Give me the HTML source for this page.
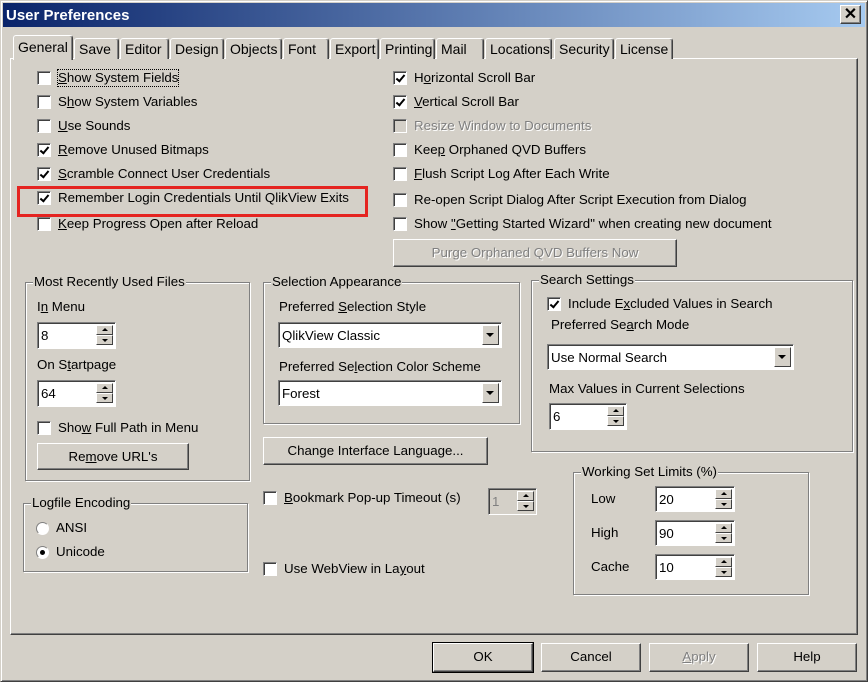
<!DOCTYPE html>
<html><head><meta charset="utf-8"><style>
*{box-sizing:border-box;margin:0;padding:0}
body{width:868px;height:682px;background:#d4d0c8;font-family:"Liberation Sans",Arial,sans-serif;font-size:13.3px;color:#000;position:relative;overflow:hidden}
.a{position:absolute;white-space:nowrap}
#win{position:absolute;left:0;top:0;width:868px;height:682px;border-top:1px solid #d4d0c8;border-left:1px solid #d4d0c8;border-right:1px solid #404040;border-bottom:1px solid #404040;box-shadow:inset 1px 1px 0 #fff,inset -1px -1px 0 #808080}
#title{position:absolute;left:3px;top:3px;width:862px;height:24px;background:linear-gradient(90deg,#0a246a,#a6caf0);color:#fff;font-weight:bold;font-size:15px;padding:4px 0 0 3px}
.close{position:absolute;left:840px;top:5px;width:21px;height:19px;background:#d4d0c8;border:1px solid;border-color:#fff #404040 #404040 #fff;box-shadow:inset -1px -1px 0 #808080;font-size:16px;font-weight:bold;color:#000;text-align:center;line-height:17px}
#panel{position:absolute;left:10px;top:58px;width:848px;height:577px;border:1px solid;border-color:#fff #404040 #404040 #fff;box-shadow:inset -1px -1px 0 #808080}
.tab{position:absolute;top:38px;height:21px;border:1px solid;border-bottom:none;border-color:#fff #404040 #404040 #fff;border-radius:3px 3px 0 0;box-shadow:inset -1px 0 0 #808080;padding:2px 0 0 4px;font-size:14px;background:#d4d0c8}
.tab.sel{top:35px;height:25px;z-index:2;padding-top:3px}
.cb{position:absolute;width:14px;height:14px;background:#fff;border:1px solid;border-color:#808080 #fff #fff #808080;box-shadow:inset 1px 1px 0 #404040}
.cb.dis{background:#d4d0c8}
.cb.on::after{content:"";position:absolute;left:4px;top:1px;width:3px;height:7px;border:solid #000;border-width:0 2px 2px 0;transform:rotate(40deg)}
.t{position:absolute;white-space:nowrap;font-size:13.3px;line-height:16px}
.dt{color:#808080;text-shadow:1px 1px 0 #fff}
.btn{position:absolute;border:1px solid;border-color:#fff #404040 #404040 #fff;box-shadow:inset -1px -1px 0 #808080;text-align:center;font-size:13.3px}
.grp{position:absolute;border:1px solid #808080;box-shadow:1px 1px 0 #fff,inset 1px 1px 0 #fff}
.grp span{position:absolute;top:-9px;left:7px;background:#d4d0c8;padding:0 1px;font-size:13.3px;line-height:16px}
.edit{position:absolute;background:#fff;border:1px solid;border-color:#808080 #fff #fff #808080;box-shadow:inset 1px 1px 0 #404040;font-size:13.3px;padding:5px 0 0 3px}
.spin{position:absolute;right:2px;width:17px}
.spin i{display:block;position:absolute;left:0;width:17px;height:10px;background:#d4d0c8;border:1px solid;border-color:#fff #404040 #404040 #fff}
.spin i::after{content:"";position:absolute;left:5px;border-left:3px solid transparent;border-right:3px solid transparent}
.spin i.u::after{top:2px;border-bottom:3px solid #000}
.spin i.d::after{top:3px;border-top:3px solid #000}
.drop{position:absolute;right:2px;top:2px;width:17px;bottom:2px;background:#d4d0c8;border:1px solid;border-color:#fff #404040 #404040 #fff}
.drop::after{content:"";position:absolute;left:3px;top:7px;border-left:4px solid transparent;border-right:4px solid transparent;border-top:4px solid #000}
.rad{position:absolute;width:13px;height:13px;border-radius:50%;background:#fff;border:1px solid;border-color:#808080 #fff #fff #808080}
.rad.on::after{content:"";position:absolute;left:3px;top:3px;width:5px;height:5px;border-radius:50%;background:#000}
</style></head><body>
<div id="win"></div>
<div id="title">User Preferences</div>
<div class="close">✕</div>
<div id="panel"></div>
<div class="tab sel" style="left:13px;width:60px">General</div>
<div class="tab" style="left:74px;width:45px">Save</div>
<div class="tab" style="left:120px;width:49px">Editor</div>
<div class="tab" style="left:170px;width:54px">Design</div>
<div class="tab" style="left:225px;width:57px">Objects</div>
<div class="tab" style="left:283px;width:46px">Font</div>
<div class="tab" style="left:330px;width:49px">Export</div>
<div class="tab" style="left:380px;width:55px">Printing</div>
<div class="tab" style="left:436px;width:48px">Mail</div>
<div class="tab" style="left:485px;width:67px">Locations</div>
<div class="tab" style="left:554px;width:60px">Security</div>
<div class="tab" style="left:615px;width:58px">License</div>

<div class="cb" style="left:37px;top:71px"></div><div class="t" style="left:58px;top:70px;outline:1px dotted #000"><u>S</u>how System Fields</div>
<div class="cb" style="left:37px;top:95px"></div><div class="t" style="left:58px;top:94px">S<u>h</u>ow System Variables</div>
<div class="cb" style="left:37px;top:119px"></div><div class="t" style="left:58px;top:118px"><u>U</u>se Sounds</div>
<div class="cb on" style="left:37px;top:143px"></div><div class="t" style="left:58px;top:142px"><u>R</u>emove Unused Bitmaps</div>
<div class="cb on" style="left:37px;top:167px"></div><div class="t" style="left:58px;top:166px"><u>S</u>cramble Connect User Credentials</div>
<div class="cb on" style="left:37px;top:191px"></div><div class="t" style="left:58px;top:190px">Remember Login Credentials Until QlikView Exits</div>
<div class="cb" style="left:37px;top:217px"></div><div class="t" style="left:58px;top:216px"><u>K</u>eep Progress Open after Reload</div>
<div class="a" style="left:17px;top:186px;width:351px;height:31px;border:3px solid #e52421"></div>

<div class="cb on" style="left:393px;top:71px"></div><div class="t" style="left:414px;top:70px">H<u>o</u>rizontal Scroll Bar</div>
<div class="cb on" style="left:393px;top:95px"></div><div class="t" style="left:414px;top:94px"><u>V</u>ertical Scroll Bar</div>
<div class="cb dis" style="left:393px;top:119px"></div><div class="t dt" style="left:414px;top:118px">Resize Window to Documents</div>
<div class="cb" style="left:393px;top:143px"></div><div class="t" style="left:414px;top:142px">Kee<u>p</u> Orphaned QVD Buffers</div>
<div class="cb" style="left:393px;top:167px"></div><div class="t" style="left:414px;top:166px"><u>F</u>lush Script Log After Each Write</div>
<div class="cb" style="left:393px;top:193px"></div><div class="t" style="left:414px;top:192px">Re-open Script Dialog After Script Execution from Dialog</div>
<div class="cb" style="left:393px;top:217px"></div><div class="t" style="left:414px;top:216px">Show <u>"</u>Getting Started Wizard" when creating new document</div>
<div class="btn dt" style="left:393px;top:239px;width:284px;height:28px;line-height:25px">Purge Orphaned QVD Buffers Now</div>

<div class="grp" style="left:25px;top:282px;width:225px;height:199px"><span>Most Recently Used Files</span></div>
<div class="t" style="left:37px;top:299px">I<u>n</u> Menu</div>
<div class="edit" style="left:37px;top:322px;width:79px;height:27px">8<div class="spin" style="top:2px"><i class="u" style="top:0"></i><i class="d" style="top:10px"></i></div></div>
<div class="t" style="left:37px;top:357px">On S<u>t</u>artpage</div>
<div class="edit" style="left:37px;top:380px;width:79px;height:27px">64<div class="spin" style="top:2px"><i class="u" style="top:0"></i><i class="d" style="top:10px"></i></div></div>
<div class="cb" style="left:37px;top:421px"></div><div class="t" style="left:58px;top:420px">Sho<u>w</u> Full Path in Menu</div>
<div class="btn" style="left:37px;top:443px;width:152px;height:27px;line-height:25px">Re<u>m</u>ove URL's</div>

<div class="grp" style="left:23px;top:503px;width:225px;height:69px"><span>Logfile Encoding</span></div>
<div class="rad" style="left:36px;top:522px"></div><div class="t" style="left:56px;top:520px">ANSI</div>
<div class="rad on" style="left:36px;top:546px"></div><div class="t" style="left:56px;top:544px">Unicode</div>

<div class="grp" style="left:263px;top:282px;width:257px;height:142px"><span>Selection Appearance</span></div>
<div class="t" style="left:279px;top:299px">Preferred <u>S</u>election Style</div>
<div class="edit" style="left:278px;top:322px;width:224px;height:26px;padding-top:5px">QlikView Classic<div class="drop"></div></div>
<div class="t" style="left:279px;top:359px">Preferred Se<u>l</u>ection Color Scheme</div>
<div class="edit" style="left:278px;top:380px;width:224px;height:26px;padding-top:5px">Forest<div class="drop"></div></div>
<div class="btn" style="left:263px;top:437px;width:225px;height:28px;line-height:25px">Change Interface Language...</div>
<div class="cb" style="left:263px;top:491px"></div><div class="t" style="left:284px;top:490px"><u>B</u>ookmark Pop-up Timeout (s)</div>
<div class="edit" style="left:488px;top:488px;width:49px;height:27px;background:#d4d0c8;color:#808080">1<div class="spin" style="top:2px"><i class="u" style="top:0"></i><i class="d" style="top:10px"></i></div></div>
<div class="cb" style="left:263px;top:562px"></div><div class="t" style="left:284px;top:561px">Use WebView in La<u>y</u>out</div>

<div class="grp" style="left:531px;top:280px;width:322px;height:172px"><span>Search Settings</span></div>
<div class="cb on" style="left:547px;top:297px"></div><div class="t" style="left:568px;top:296px">Include E<u>x</u>cluded Values in Search</div>
<div class="t" style="left:551px;top:317px">Preferred Se<u>a</u>rch Mode</div>
<div class="edit" style="left:547px;top:344px;width:247px;height:26px;padding-top:5px">Use Normal Search<div class="drop"></div></div>
<div class="t" style="left:549px;top:381px">Max Values in Current Selections</div>
<div class="edit" style="left:549px;top:403px;width:78px;height:27px">6<div class="spin" style="top:2px"><i class="u" style="top:0"></i><i class="d" style="top:10px"></i></div></div>

<div class="grp" style="left:573px;top:472px;width:236px;height:123px"><span>Working Set Limits (%)</span></div>
<div class="t" style="left:591px;top:491px">Low</div>
<div class="edit" style="left:655px;top:486px;width:80px;height:26px">20<div class="spin" style="top:2px"><i class="u" style="top:0"></i><i class="d" style="top:10px"></i></div></div>
<div class="t" style="left:591px;top:525px">High</div>
<div class="edit" style="left:655px;top:520px;width:80px;height:26px">90<div class="spin" style="top:2px"><i class="u" style="top:0"></i><i class="d" style="top:10px"></i></div></div>
<div class="t" style="left:591px;top:559px">Cache</div>
<div class="edit" style="left:655px;top:554px;width:80px;height:26px">10<div class="spin" style="top:2px"><i class="u" style="top:0"></i><i class="d" style="top:10px"></i></div></div>

<div class="btn" style="left:433px;top:643px;width:100px;height:29px;line-height:26px;outline:1px solid #000">OK</div>
<div class="btn" style="left:541px;top:643px;width:100px;height:29px;line-height:26px">Cancel</div>
<div class="btn dt" style="left:649px;top:643px;width:100px;height:29px;line-height:26px"><u>A</u>pply</div>
<div class="btn" style="left:757px;top:643px;width:100px;height:29px;line-height:26px">Help</div>
</body></html>
